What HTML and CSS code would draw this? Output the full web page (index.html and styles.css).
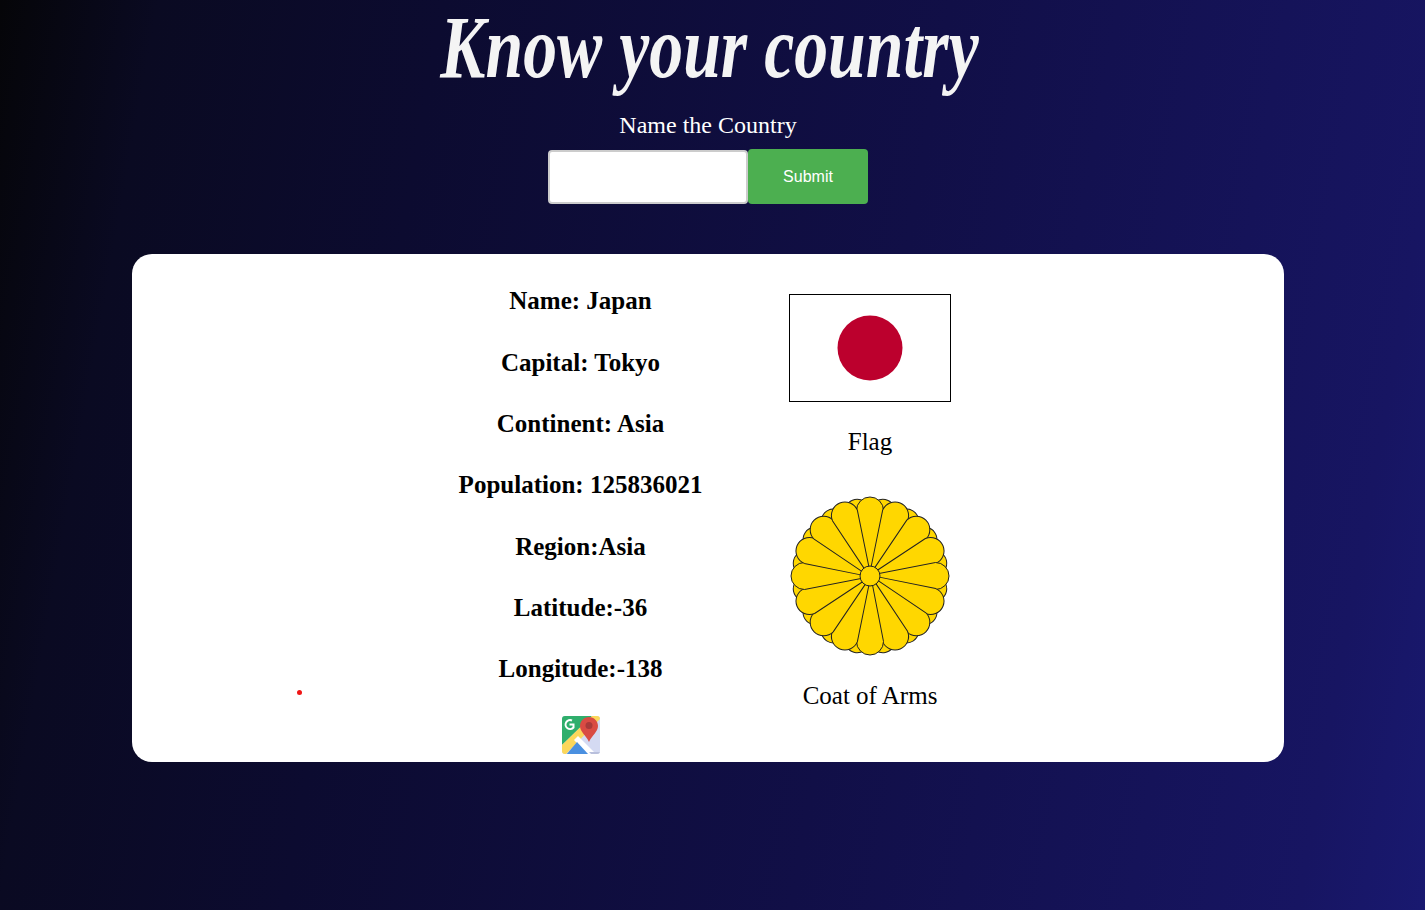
FILE: index.html
```html
<!DOCTYPE html>
<html lang="en">
<head>
    <meta charset="UTF-8">
    <meta name="viewport" content="width=device-width, initial-scale=1.0">
    <title>Know your country</title>
    <link rel="stylesheet" href="styles.css">
</head>
<body>
    <div class="page">
        <h1 class="title">Know your country</h1>
        <form class="search">
            <label class="search-label" for="country">Name the Country</label>
            <div class="search-row">
                <input type="text" id="country" class="input-box">
                <button type="button" class="button">Submit</button>
            </div>
        </form>

        <div class="card">
            <span class="dot"></span>
            <div class="facts">
                <h3>Name: Japan</h3>
                <h3>Capital: Tokyo</h3>
                <h3>Continent: Asia</h3>
                <h3>Population: 125836021</h3>
                <h3>Region:Asia</h3>
                <h3>Latitude:-36</h3>
                <h3>Longitude:-138</h3>
                <a class="map-link" href="#">
                    <svg width="40" height="40" viewBox="0 0 40 40">
                        <defs>
                            <clipPath id="map-clip"><rect x="1" y="1" width="38" height="38" rx="3"/></clipPath>
                        </defs>
                        <g clip-path="url(#map-clip)">
                            <rect width="40" height="40" fill="#d4daf2"/>
                            <path d="M0 0H32L0 31Z" fill="#2fae6c"/>
                            <path d="M0 31L32 0H40V3L4 40H0Z" fill="#fbd75b"/>
                            <path d="M13 25L17 21L35 39H26Z" fill="#fff"/>
                            <path d="M5 40L16 27L28 40Z" fill="#4a90e0"/>
                            <path d="M31 40H40V37H28Z" fill="#b9c0dc"/>
                        </g>
                        <path d="M28 2C23 2 19 6 19 11C19 17 25 20 28 27C31 20 37 17 37 11C37 6 33 2 28 2Z" fill="#d94b43"/>
                        <circle cx="28" cy="10.500" r="3.500" fill="#a83a3a"/>
                        <path d="M11 5.500A4.500 4.500 0 1 0 12.500 12.500V9.500H8.500" fill="none" stroke="#fff" stroke-width="2"/>
                    </svg>
                </a>
            </div>
            <div class="images">
                <figure class="image">
                    <svg class="flag" width="162" height="108" viewBox="0 0 160 106">
                        <rect width="160" height="106" fill="#fff"/>
                        <circle cx="80" cy="53" r="32.500" fill="#bc002d"/>
                    </svg>
                    <figcaption>Flag</figcaption>
                </figure>
                <figure class="image">
                    <svg class="emblem" width="162" height="162" viewBox="-81 -81 162 162">
                        <defs>
                            <path id="petal-back" d="M-2 -9L-12 -66A12 12 0 0 1 12 -66L2 -9Z" fill="#ffd700" stroke="#222" stroke-width="1"/>
                            <path id="petal" d="M-2.500 -9L-13.500 -65.500A13.500 13.500 0 0 1 13.500 -65.500L2.500 -9Z" fill="#ffd700" stroke="#222" stroke-width="1"/>
                        </defs>
                        <g transform="rotate(11.25)">
                            <use href="#petal-back"/>
                            <use href="#petal-back" transform="rotate(22.5)"/>
                            <use href="#petal-back" transform="rotate(45)"/>
                            <use href="#petal-back" transform="rotate(67.5)"/>
                            <use href="#petal-back" transform="rotate(90)"/>
                            <use href="#petal-back" transform="rotate(112.5)"/>
                            <use href="#petal-back" transform="rotate(135)"/>
                            <use href="#petal-back" transform="rotate(157.5)"/>
                            <use href="#petal-back" transform="rotate(180)"/>
                            <use href="#petal-back" transform="rotate(202.5)"/>
                            <use href="#petal-back" transform="rotate(225)"/>
                            <use href="#petal-back" transform="rotate(247.5)"/>
                            <use href="#petal-back" transform="rotate(270)"/>
                            <use href="#petal-back" transform="rotate(292.5)"/>
                            <use href="#petal-back" transform="rotate(315)"/>
                            <use href="#petal-back" transform="rotate(337.5)"/>
                        </g>
                        <use href="#petal"/>
                        <use href="#petal" transform="rotate(22.5)"/>
                        <use href="#petal" transform="rotate(45)"/>
                        <use href="#petal" transform="rotate(67.5)"/>
                        <use href="#petal" transform="rotate(90)"/>
                        <use href="#petal" transform="rotate(112.5)"/>
                        <use href="#petal" transform="rotate(135)"/>
                        <use href="#petal" transform="rotate(157.5)"/>
                        <use href="#petal" transform="rotate(180)"/>
                        <use href="#petal" transform="rotate(202.5)"/>
                        <use href="#petal" transform="rotate(225)"/>
                        <use href="#petal" transform="rotate(247.5)"/>
                        <use href="#petal" transform="rotate(270)"/>
                        <use href="#petal" transform="rotate(292.5)"/>
                        <use href="#petal" transform="rotate(315)"/>
                        <use href="#petal" transform="rotate(337.5)"/>
                        <circle r="10" fill="#ffd700" stroke="#222" stroke-width="1"/>
                    </svg>
                    <figcaption>Coat of Arms</figcaption>
                </figure>
            </div>
        </div>
    </div>
</body>
</html>
```
FILE: styles.css
```css
html, body {
    margin: 0;
    height: 100%;
}
body {
    font-family: "Liberation Serif", serif;
    background: linear-gradient(100deg, #050508 0%, #0a0a22 10%, #0c0b30 28%, #110f47 60%, #171562 92%, #191970 100%);
    overflow: hidden;
}
.page {
    width: 1416px;
}
.title {
    margin: 0;
    padding-left: 4px;
    height: 103px;
    box-sizing: border-box;
    text-align: center;
    font-family: "Liberation Serif", cursive;
    font-style: italic;
    font-size: 88px;
    line-height: 96px;
    font-weight: bold;
    color: #f4f4f4;
    white-space: nowrap;
    transform: scaleX(0.77);
}
.search {
    display: flex;
    flex-direction: column;
    align-items: center;
}
.search-label {
    margin-top: 8px;
    font-size: 24px;
    line-height: 28px;
    color: #fff;
}
.search-row {
    display: flex;
    align-items: center;
    margin-top: 10px;
}
.input-box {
    width: 200px;
    height: 54px;
    box-sizing: border-box;
    border: 2px solid #ccc;
    border-radius: 4px;
    background: #fff;
}
.button {
    width: 120px;
    height: 55px;
    border: none;
    border-radius: 4px;
    background-color: #4caf50;
    color: #fff;
    font-family: "Liberation Sans", sans-serif;
    font-size: 16px;
}
.card {
    position: relative;
    display: flex;
    width: 1152px;
    height: 508px;
    margin: 50px auto 0;
    padding: 33.400px 0 0 298px;
    box-sizing: border-box;
    background: #fff;
    border-radius: 20px;
    overflow: hidden;
}
.dot {
    position: absolute;
    left: 165px;
    top: 436px;
    width: 5px;
    height: 5px;
    border-radius: 50%;
    background: #f01515;
}
.facts {
    width: 301px;
    text-align: center;
}
.facts h3 {
    margin: 0 0 33.600px;
    font-size: 25px;
    line-height: 27.700px;
}
.map-link {
    display: block;
    height: 40px;
    width: 40px;
    margin: -1.400px auto 0;
}
.images {
    margin-left: 58px;
    margin-top: 6.600px;
}
.image {
    margin: 0;
    width: 162px;
    text-align: center;
    font-size: 25px;
}
.image svg {
    display: block;
}
.image figcaption {
    margin: 26px 0 39px;
    line-height: 28px;
}
.emblem + figcaption {
    margin-top: 25px;
}
.flag {
    border: 1px solid #000;
    box-sizing: border-box;
}
```
